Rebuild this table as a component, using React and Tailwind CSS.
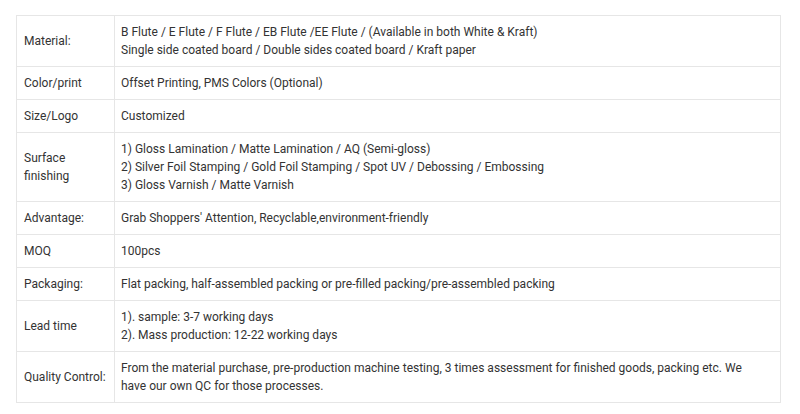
const rows = [
  { label: "Material:", lines: ["B Flute / E Flute / F Flute / EB Flute /EE Flute / (Available in both White & Kraft)", "Single side coated board / Double sides coated board / Kraft paper"] },
  { label: "Color/print", lines: ["Offset Printing, PMS Colors (Optional)"] },
  { label: "Size/Logo", lines: ["Customized"] },
  { label: ["Surface", "finishing"], lines: ["1) Gloss Lamination / Matte Lamination / AQ (Semi-gloss)", "2) Silver Foil Stamping / Gold Foil Stamping / Spot UV / Debossing / Embossing", "3) Gloss Varnish / Matte Varnish"] },
  { label: "Advantage:", lines: ["Grab Shoppers' Attention, Recyclable,environment-friendly"] },
  { label: "MOQ", lines: ["100pcs"] },
  { label: "Packaging:", lines: ["Flat packing, half-assembled packing or pre-filled packing/pre-assembled packing"] },
  { label: "Lead time", lines: ["1). sample: 3-7 working days", "2). Mass production: 12-22 working days"] },
  { label: "Quality Control:", lines: ["From the material purchase, pre-production machine testing, 3 times assessment for finished goods, packing etc. We have our own QC for those processes."] },
];

export default function App() {
  return (
    <div className="w-[800px] h-[414px] bg-white pt-[15px] pl-[16px] font-['Roboto',sans-serif] text-[12px] leading-[18px] text-[#333]">
      <table className="w-[765px] border-collapse">
        <tbody>
          {rows.map((row, i) => (
            <tr key={i}>
              <td className="w-[98px] whitespace-nowrap border border-[#e6e6e6] px-[7px] py-[7px] align-middle">
                {Array.isArray(row.label) ? row.label.map((l, j) => <div key={j}>{l}</div>) : row.label}
              </td>
              <td className="border border-[#e6e6e6] pl-[6px] pr-[24px] py-[7px] align-middle">
                {row.lines.map((l, j) => <div key={j}>{l}</div>)}
              </td>
            </tr>
          ))}
        </tbody>
      </table>
    </div>
  );
}
